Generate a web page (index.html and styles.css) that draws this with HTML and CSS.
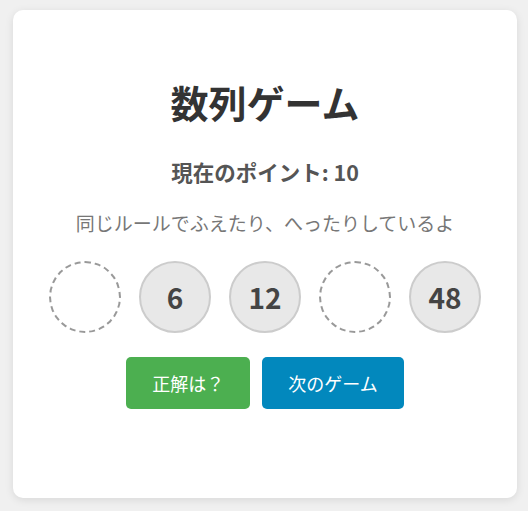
FILE: index.html
```html
<!DOCTYPE html>
<html lang="ja">
<head>
    <meta charset="UTF-8"/>
    <title>数列ゲーム</title>
    <link rel="stylesheet" href="styles.css">
</head>
<body>
<div class="container">
    <h1>数列ゲーム</h1>
    <div class="points">現在のポイント: 10</div>
    <p class="hint">同じルールでふえたり、へったりしているよ</p>
    <div class="sequence">
        <div class="cell blank"></div>
        <div class="cell">6</div>
        <div class="cell">12</div>
        <div class="cell blank"></div>
        <div class="cell">48</div>
    </div>
    <div class="actions">
        <button class="answer">正解は？</button>
        <button class="next">次のゲーム</button>
    </div>
</div>
</body>
</html>
```

FILE: styles.css
```css
body {
    font-family: 'Noto Sans CJK JP', 'Noto Sans', sans-serif;
    background-color: #f0f0f0;
    margin: 0;
    padding: 10px 11px 13px 13px;
}

.container {
    background-color: white;
    border-radius: 10px;
    box-shadow: 0 2px 8px rgba(0, 0, 0, 0.1);
    height: 488px;
    box-sizing: border-box;
    padding: 72px 20px 0;
    text-align: center;
}

h1 {
    margin: 0;
    font-size: 38px;
    line-height: 40px;
    color: #333;
}

.points {
    margin-top: 34px;
    font-size: 21.5px;
    font-weight: bold;
    color: #555;
}

.hint {
    margin: 22px 0 0;
    font-size: 19px;
    color: #777;
}

.sequence {
    display: flex;
    justify-content: center;
    gap: 18px;
    margin-top: 25px;
}

.cell {
    width: 72px;
    height: 72px;
    box-sizing: border-box;
    border-radius: 50%;
    border: 2px solid #ccc;
    background-color: #e8e8e8;
    display: flex;
    align-items: center;
    justify-content: center;
    font-size: 28px;
    font-weight: bold;
    color: #444;
}

.cell.blank {
    background-color: white;
    border: 2px dashed #999;
}

.actions {
    display: flex;
    justify-content: center;
    gap: 12px;
    margin-top: 24px;
}

button {
    font-family: inherit;
    font-size: 18px;
    color: white;
    border: none;
    border-radius: 5px;
    height: 52px;
    padding: 0 26px;
    cursor: pointer;
}

.answer {
    background-color: #4caf50;
}

.next {
    background-color: #0288bd;
}
```
